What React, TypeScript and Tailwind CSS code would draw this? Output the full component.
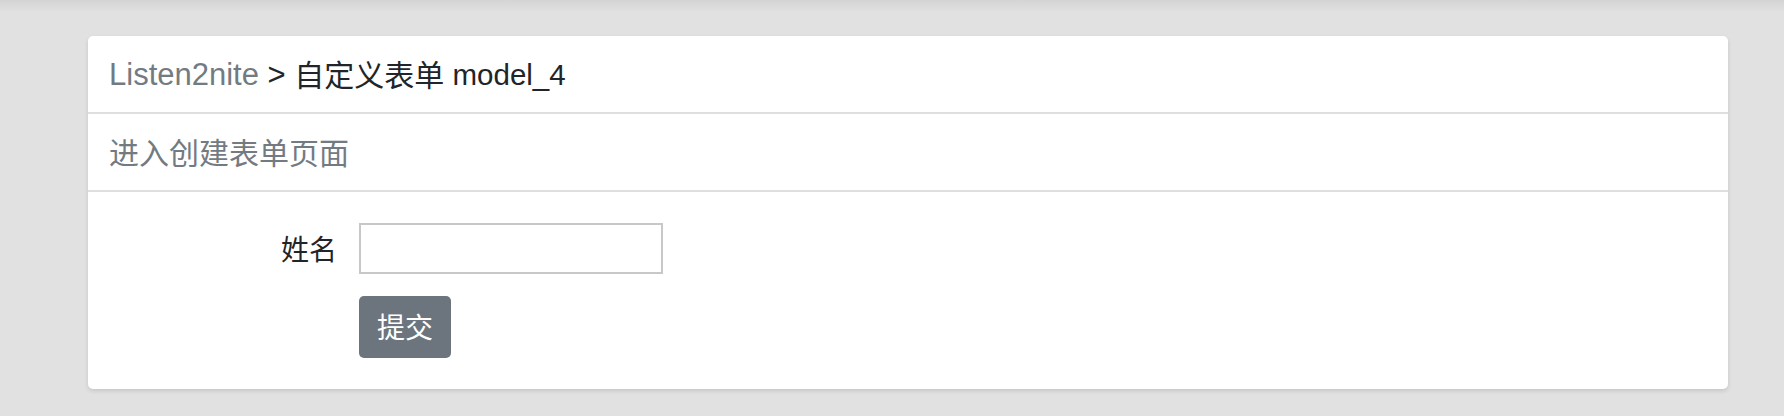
const FONT = "font-['Liberation_Sans','Noto_Sans_CJK_SC',sans-serif]";

function FormRow({ label }: { label: string }) {
  return (
    <div className="flex items-center">
      <label className="w-[250px] pr-[22px] pt-[4px] text-right text-[28px] text-[#212529]">{label}</label>
      <input
        type="text"
        className="h-[51px] w-[304px] border-2 border-[#c8c8c8] bg-white px-3 text-[27px] outline-none"
      />
    </div>
  );
}

export default function App() {
  return (
    <div
      className={`${FONT} min-h-[416px] bg-[#e1e1e1] bg-[linear-gradient(to_bottom,#d4d4d4,#e1e1e1_12px)] pl-[88px] pr-[56px] pt-[36px]`}
    >
      <div className="rounded-[5px] bg-white shadow-[0_2px_4px_rgba(0,0,0,0.12)]">
        <div className="flex h-[78px] items-center border-b-2 border-[#dfdfdf] px-[21px] pt-[3px] text-[30px] text-[#212529]">
          <span className="text-[31px] text-[#737b82]">Listen2nite</span>
          <span className="whitespace-pre text-[31px]">{" > "}</span>
          <span>自定义表单</span>
          <span className="whitespace-pre text-[29.5px]">{" model_4"}</span>
        </div>
        <div className="flex h-[78px] items-center border-b-2 border-[#dfdfdf] px-[21px] pt-[3px] text-[30px] text-[#737b82]">
          进入创建表单页面
        </div>
        <div className="flex flex-col gap-[22px] px-[21px] pb-[31px] pt-[31px]">
          <FormRow label="姓名" />
          <div className="pl-[250px]">
            <button
              type="button"
              className="h-[62px] w-[92px] rounded-[5px] bg-[#6c757d] pt-[3px] text-[28px] text-white"
            >
              提交
            </button>
          </div>
        </div>
      </div>
    </div>
  );
}
